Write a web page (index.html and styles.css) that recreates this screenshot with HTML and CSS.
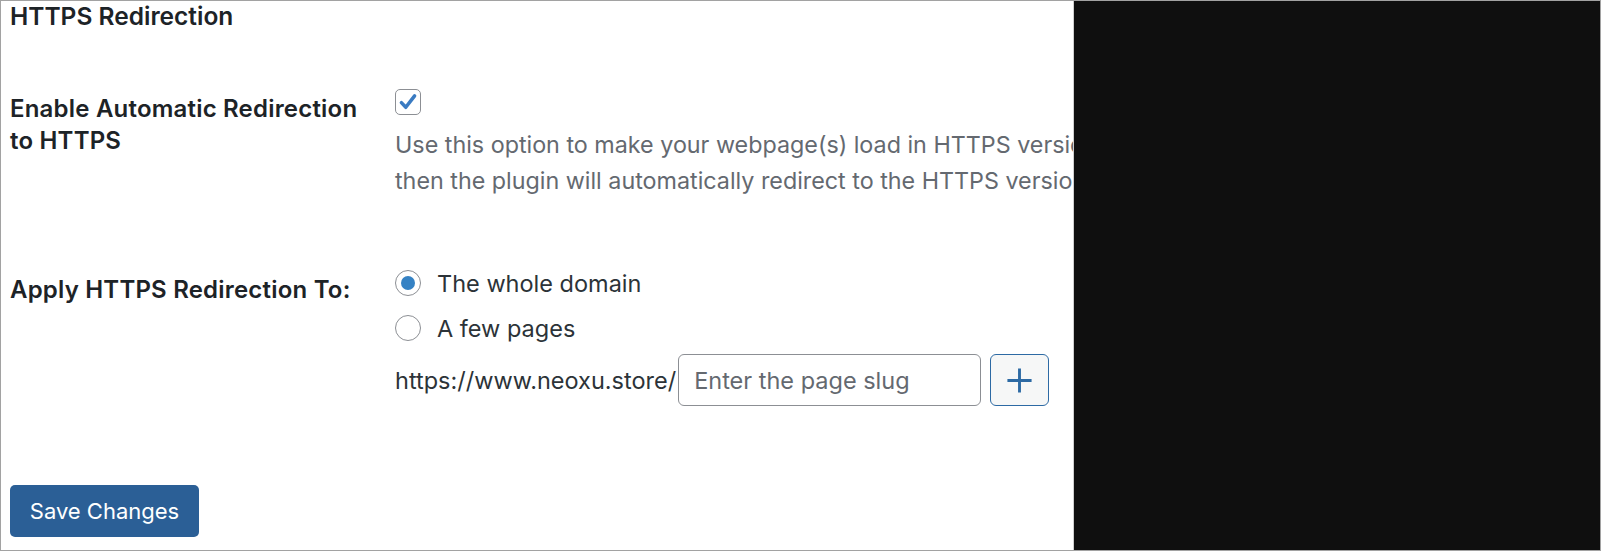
FILE: index.html
```html
<!DOCTYPE html>
<html>
<head>
<meta charset="utf-8">
<link rel="stylesheet" href="styles.css">
</head>
<body>
<div class="frame">
  <div class="content">
    <h2 class="title">HTTPS Redirection</h2>
    <div class="row row-enable">
      <div class="label label-enable">Enable Automatic Redirection<br>to HTTPS</div>
      <div class="field">
        <span class="checkbox">
          <svg viewBox="0 0 20 20" width="22" height="22"><path d="M4 10.6 L8 14.8 L16 4.4" fill="none" stroke="#3a7bc2" stroke-width="3.2" stroke-linecap="round" stroke-linejoin="round"/></svg>
        </span>
        <p class="desc">Use this option to make your webpage(s) load in HTTPS version only. If someone enters a non-HTTPS URL in the browser's address bar<br>then the plugin will automatically redirect to the HTTPS version of that URL.</p>
      </div>
    </div>
    <div class="row row-apply">
      <div class="label label-apply">Apply HTTPS Redirection To:</div>
      <div class="field">
        <div class="radio-item"><span class="radio checked"></span><span>The whole domain</span></div>
        <div class="radio-item"><span class="radio"></span><span>A few pages</span></div>
        <div class="slug-row">
          <span class="prefix">https://www.neoxu.store/</span>
          <span class="slug-input">Enter the page slug</span>
          <span class="plus-btn">
            <svg viewBox="0 0 24 24" width="29" height="29"><path d="M12 2 V22 M2 12 H22" stroke="#2d6aa4" stroke-width="2.4" fill="none"/></svg>
          </span>
        </div>
      </div>
    </div>
    <div class="submit">
      <span class="save-btn">Save Changes</span>
    </div>
  </div>
  <div class="blackout"></div>
</div>
</body>
</html>
```
FILE: styles.css
```css
html, body {
  margin: 0;
  padding: 0;
  background: #ffffff;
}
body {
  font-family: Inter, "Open Sans", sans-serif;
  color: #1d2327;
}
.frame {
  width: 1601px;
  height: 551px;
  box-sizing: border-box;
  border: 1px solid #a2a2a2;
  display: flex;
  background: #ffffff;
}
.content {
  width: 1072px;
  flex: none;
  overflow: hidden;
  padding-left: 9px;
  box-sizing: border-box;
  white-space: nowrap;
}
.blackout {
  flex: 1;
  background: #0f0f0f;
  border-left: 1px solid #cfcfcf;
}
.title {
  margin: 0;
  font-size: 24.5px;
  line-height: 31px;
  font-weight: 600;
  color: #1d2327;
}
.row {
  display: flex;
}
.label {
  width: 385px;
  flex: none;
  font-size: 24px;
  letter-spacing: 0.2px;
  font-weight: 600;
  line-height: 32px;
  color: #1d2327;
}
.row-enable {
  margin-top: 57px;
}
.label-enable {
  margin-top: 4px;
}
.field {
  display: flex;
  flex-direction: column;
  align-items: flex-start;
}
.checkbox {
  width: 26px;
  height: 26px;
  box-sizing: border-box;
  border: 1.5px solid #8c8f94;
  border-radius: 5px;
  display: flex;
  align-items: center;
  justify-content: center;
  background: #fff;
}
.desc {
  margin: 12px 0 0 0;
  font-size: 23.3px;
  line-height: 35.5px;
  color: #646970;
}
.row-apply {
  margin-top: 65px;
}
.label-apply {
  margin-top: 11px;
}
.radio-item {
  height: 40px;
  display: flex;
  align-items: center;
  gap: 16px;
  font-size: 23.5px;
  color: #2c3338;
}
.radio-item + .radio-item {
  margin-top: 5px;
}
.radio {
  width: 26px;
  height: 26px;
  box-sizing: border-box;
  border: 1.5px solid #8c8f94;
  border-radius: 50%;
  display: flex;
  align-items: center;
  justify-content: center;
  background: #fff;
}
.radio.checked::after {
  content: "";
  width: 14px;
  height: 14px;
  border-radius: 50%;
  background: #3582c4;
}
.slug-row {
  margin-top: 6px;
  display: flex;
  align-items: center;
  font-size: 23.5px;
  color: #2c3338;
}
.prefix {
  margin-right: 2px;
}
.slug-input {
  width: 303px;
  height: 52px;
  box-sizing: border-box;
  border: 1.5px solid #8c8f94;
  border-radius: 6px;
  padding-left: 15px;
  display: flex;
  align-items: center;
  color: #646970;
}
.plus-btn {
  margin-left: 9px;
  width: 59px;
  height: 52px;
  box-sizing: border-box;
  border: 1.5px solid #2d6aa4;
  border-radius: 6px;
  background: #f6f7f7;
  display: flex;
  align-items: center;
  justify-content: center;
}
.submit {
  margin-top: 79px;
}
.save-btn {
  display: inline-flex;
  align-items: center;
  justify-content: center;
  width: 189px;
  height: 52px;
  box-sizing: border-box;
  background: #2b5f96;
  color: #ffffff;
  border-radius: 5px;
  font-size: 22px;
}
```
